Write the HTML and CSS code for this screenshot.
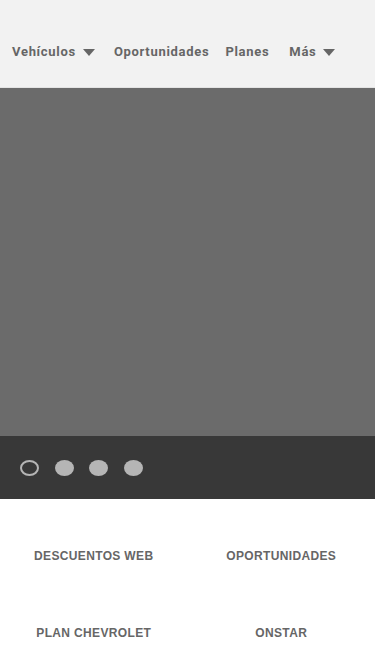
FILE: index.html
```html
<!DOCTYPE html>
<html lang="es">
<head>
    <meta charset="UTF-8">
    <meta name="viewport" content="width=device-width, initial-scale=1.0">
    <title>Chevrolet</title>
    <link rel="stylesheet" href="styles.css">
</head>
<body>
    <div class="header">
        <nav class="nav">
            <a class="nav-item" href="#">Vehículos <span class="caret"></span></a>
            <a class="nav-item" href="#">Oportunidades</a>
            <a class="nav-item planes" href="#">Planes</a>
            <a class="nav-item" href="#">Más <span class="caret"></span></a>
        </nav>
    </div>
    <div class="hero">
        <div class="slides"></div>
        <div class="dots">
            <span class="dot active"></span>
            <span class="dot"></span>
            <span class="dot"></span>
            <span class="dot"></span>
        </div>
    </div>
    <div class="links">
        <a class="link" href="#">DESCUENTOS WEB</a>
        <a class="link" href="#">OPORTUNIDADES</a>
        <a class="link" href="#">PLAN CHEVROLET</a>
        <a class="link" href="#">ONSTAR</a>
    </div>
</body>
</html>
```

FILE: styles.css
```css
html, body {
    margin: 0;
    padding: 0;
}
body {
    font-family: Roboto, 'Liberation Sans', Arial, sans-serif;
    background-color: #fff;
}
.header {
    background-color: #f2f2f2;
    height: 87px;
    border-bottom: 1px solid #e4e4e4;
}
.nav {
    display: flex;
    align-items: center;
    padding: 43px 0 0 12px;
}
.nav-item {
    display: flex;
    align-items: center;
    color: #666;
    font-size: 13px;
    font-weight: 700;
    letter-spacing: 0.7px;
    text-decoration: none;
    margin-right: 16px;
    line-height: 18px;
}
.nav-item.planes {
    margin-right: 20px;
}
.caret {
    display: inline-block;
    width: 0;
    height: 0;
    border-left: 6px solid transparent;
    border-right: 6px solid transparent;
    border-top: 7px solid #666;
    margin-left: 7px;
    margin-right: 3px;
}
.hero {
    background-color: #6b6b6b;
}
.slides {
    height: 348px;
}
.dots {
    background-color: #383838;
    height: 63px;
    display: flex;
    align-items: center;
    padding-left: 20px;
    gap: 15.5px;
}
.dot {
    width: 19px;
    height: 16px;
    border-radius: 50%;
    background-color: #b5b5b5;
    box-sizing: border-box;
}
.dot.active {
    background-color: transparent;
    border: 2px solid #b5b5b5;
}
.links {
    display: grid;
    grid-template-columns: 1fr 1fr;
    grid-auto-rows: 77px;
    padding-top: 18px;
}
.link {
    display: flex;
    justify-content: center;
    align-items: center;
    font-family: 'Liberation Sans', Arial, sans-serif;
    font-size: 12px;
    font-weight: 700;
    color: #666;
    text-decoration: none;
    letter-spacing: 0.35px;
}
```
